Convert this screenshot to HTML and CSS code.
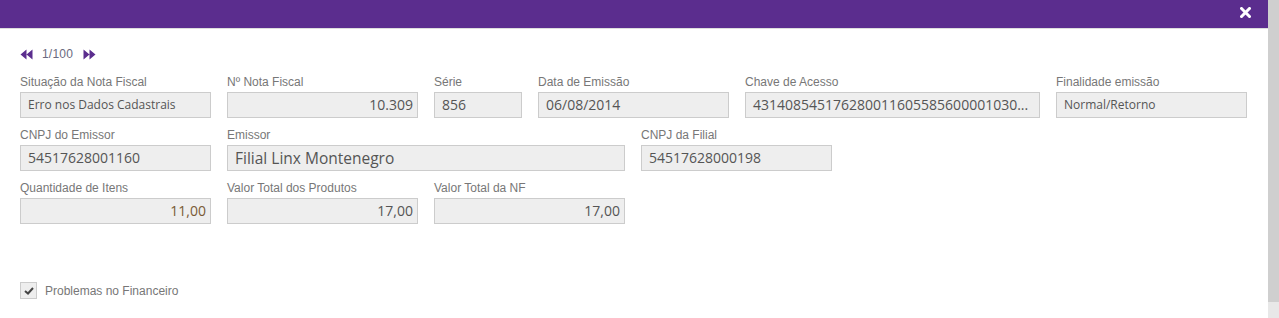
FILE: index.html
```html
<!DOCTYPE html>
<html lang="pt-BR">
<head>
  <meta charset="UTF-8" />
  <meta name="viewport" content="width=device-width, initial-scale=1.0" />
  <title>Nota Fiscal</title>
  <link rel="stylesheet" href="styles.css">
</head>
<body>
  <div class="page">
    <div class="modal">
      <div class="modal-header">
        <span class="close">
          <svg width="11" height="11" viewBox="0 0 11 11"><path d="M1.5 1.5 L9.5 9.5 M9.5 1.5 L1.5 9.5" stroke="#fff" stroke-width="3" stroke-linecap="square"/></svg>
        </span>
      </div>

      <div class="modal-body">
        <div class="pager">
          <svg width="13" height="11" viewBox="0 0 13 11"><path d="M0.5 5.5 L6.5 0.5 L6.5 10.5 Z M6.5 5.5 L12.5 0.5 L12.5 10.5 Z" fill="#5b2d8e"/></svg>
          <span class="pager-text">1/100</span>
          <svg width="13" height="11" viewBox="0 0 13 11"><path d="M0.5 0.5 L6.5 5.5 L0.5 10.5 Z M6.5 0.5 L12.5 5.5 L6.5 10.5 Z" fill="#5b2d8e"/></svg>
        </div>

        <div class="row">
          <div class="field w191">
            <label>Situação da Nota Fiscal</label>
            <div class="input small">Erro nos Dados Cadastrais</div>
          </div>
          <div class="field w191">
            <label>Nº Nota Fiscal</label>
            <div class="input num">10.309</div>
          </div>
          <div class="field w88">
            <label>Série</label>
            <div class="input">856</div>
          </div>
          <div class="field w191">
            <label>Data de Emissão</label>
            <div class="input">06/08/2014</div>
          </div>
          <div class="field w295">
            <label>Chave de Acesso</label>
            <div class="input">431408545176280011605585600001030...</div>
          </div>
          <div class="field w191">
            <label>Finalidade emissão</label>
            <div class="input small">Normal/Retorno</div>
          </div>
        </div>

        <div class="row">
          <div class="field w191">
            <label>CNPJ do Emissor</label>
            <div class="input">54517628001160</div>
          </div>
          <div class="field w398">
            <label>Emissor</label>
            <div class="input big">Filial Linx Montenegro</div>
          </div>
          <div class="field w191">
            <label>CNPJ da Filial</label>
            <div class="input">54517628000198</div>
          </div>
        </div>

        <div class="row">
          <div class="field w191">
            <label>Quantidade de Itens</label>
            <div class="input num qty">11,00</div>
          </div>
          <div class="field w191">
            <label>Valor Total dos Produtos</label>
            <div class="input num">17,00</div>
          </div>
          <div class="field w191">
            <label>Valor Total da NF</label>
            <div class="input num">17,00</div>
          </div>
        </div>

        <div class="check-row">
          <span class="checkbox">
            <svg width="10" height="8" viewBox="0 0 10 8"><path d="M1 4 L4 6.5 L9 1" stroke="#444" stroke-width="2" fill="none"/></svg>
          </span>
          <span class="check-label">Problemas no Financeiro</span>
        </div>
      </div>
    </div>
    <div class="scrollbar"><div class="scroll-end"></div></div>
  </div>
</body>
</html>
```

FILE: styles.css
```css
* {
  box-sizing: border-box;
}
body {
  margin: 0;
  font-family: 'Liberation Sans', Arial, sans-serif;
  background: #fff;
  overflow: hidden;
}
.page {
  display: flex;
  height: 318px;
}
.modal {
  flex: 1;
}
.modal-header {
  height: 29px;
  background: #5b2d8e;
  border-bottom: 1px solid #ddd;
  display: flex;
  justify-content: flex-end;
  align-items: center;
  padding-right: 17px;
}
.close {
  display: flex;
  margin-top: -4px;
}
.modal-body {
  padding: 19px 20px 0;
}
.pager {
  display: flex;
  align-items: center;
  height: 12px;
  font-size: 12px;
  color: #6a6a80;
}
.pager-text {
  margin: 0 10px 0 9px;
  letter-spacing: 0.2px;
}
.row {
  display: flex;
  gap: 16px;
  margin-top: 10px;
}
.pager + .row {
  margin-top: 15px;
}
.field label {
  display: block;
  font-size: 12px;
  color: #777;
  height: 14px;
  line-height: 14px;
  margin-bottom: 3px;
}
.w88 { width: 88px; }
.w191 { width: 191px; }
.w295 { width: 295px; }
.w398 { width: 398px; }
.input {
  height: 26px;
  background: #eee;
  border: 1px solid #ccc;
  padding: 0 7px;
  font-family: 'Open Sans', sans-serif;
  font-size: 14px;
  line-height: 24px;
  color: #555;
  white-space: nowrap;
  overflow: hidden;
}
.input.small {
  font-size: 12px;
}
.input.big {
  font-size: 15.5px;
}
.input.num {
  text-align: right;
  padding-right: 4px;
}
.input.qty {
  color: #7a5a35;
}
.check-row {
  display: flex;
  align-items: center;
  margin-top: 58px;
}
.checkbox {
  width: 17px;
  height: 17px;
  background: #eee;
  border: 1px solid #ccc;
  display: flex;
  align-items: center;
  justify-content: center;
}
.check-label {
  font-size: 12px;
  color: #777;
  margin-left: 8px;
}
.scrollbar {
  width: 11px;
  background: #cfcfcf;
  display: flex;
  flex-direction: column;
  justify-content: flex-end;
}
.scroll-end {
  height: 16px;
  background: #e8e8e8;
}
```
